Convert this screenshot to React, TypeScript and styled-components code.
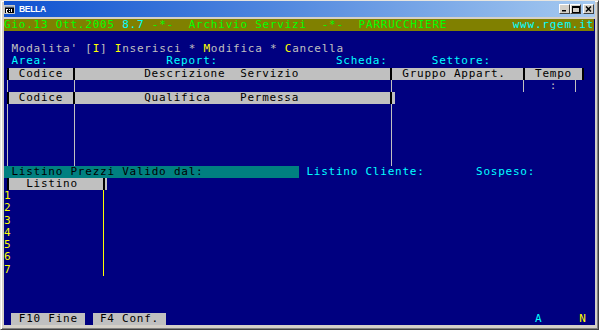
import React from "react";
import styled, { createGlobalStyle } from "styled-components";

// console cell size (80 x 25 grid scaled into the window)
const CW = 7.3875;
const RH = 12.25;
const FONT = 11;

const GlobalStyle = createGlobalStyle`
  html, body {
    margin: 0;
    padding: 0;
    background: #d4d0c8;
  }
  body {
    width: 599px;
    height: 330px;
    overflow: hidden;
  }
`;

type Place = { $c: number; $r: number; $w?: number; $h?: number };

const place = ({ $c, $r, $w = 1, $h = 1 }: Place) => `
  grid-column: ${$c + 1} / span ${$w};
  grid-row: ${$r + 1} / span ${$h};
`;

const Window = styled.div`
  width: 599px;
  height: 330px;
  box-sizing: border-box;
  background: #d4d0c8;
  border: 1px solid;
  border-color: #e8e6e0 #404040 #404040 #e8e6e0;
  box-shadow: inset 1px 1px 0 #ffffff, inset -1px -1px 0 #808080;
  padding: 0 3px 4px 3px;
  display: flex;
  flex-direction: column;
`;

const TitleBar = styled.div`
  height: 16px;
  margin-bottom: 1.5px;
  display: flex;
  align-items: center;
  gap: 4px;
  padding: 0 1px 0 0;
  background: linear-gradient(to right, #0f52d0, #4f86de 45%, #a6caf0);
`;

const TitleText = styled.span`
  flex: 1;
  color: #ffffff;
  font-family: "Liberation Sans", Arial, sans-serif;
  font-weight: bold;
  font-size: 8.5px;
  letter-spacing: -0.3px;
`;

const Controls = styled.div`
  display: flex;
  align-items: center;
  gap: 0;
`;

const CtrlButton = styled.div<{ $gap?: boolean }>`
  width: 11px;
  height: 10px;
  margin-left: ${(p) => (p.$gap ? "2px" : "0")};
  box-sizing: border-box;
  background: #d4d0c8;
  border: 1px solid;
  border-color: #ffffff #404040 #404040 #ffffff;
  display: flex;
  align-items: center;
  justify-content: center;
`;

const Console = styled.div`
  display: grid;
  grid-template-columns: repeat(80, ${CW}px);
  grid-template-rows: repeat(25, ${RH}px);
  background: #000080;
  font-family: "DejaVu Sans Mono", "Liberation Mono", monospace;
  font-size: ${FONT}px;
  letter-spacing: ${CW - FONT * 0.60205}px;
  line-height: ${RH}px;
  color: #c0c0c0;
  white-space: pre;
`;

const StatusBar = styled.div`
  grid-column: 1 / span 80;
  grid-row: 1;
  display: flex;
  background: #808000;
  color: #00ff00;
`;

const Tint = styled.span<{ $fg: string }>`
  color: ${(p) => p.$fg};
`;

const Url = styled.span`
  margin-left: auto;
  color: #00ffff;
`;

const MenuLine = styled.div<Place>`
  ${place}
  color: #c0c0c0;
`;

const Hot = styled.span`
  color: #ffff00;
`;

const FieldLabel = styled.div<Place>`
  ${place}
  color: #00ffff;
`;

const TableHeader = styled.div<Place & { $cut?: boolean }>`
  ${place}
  background: #c0c0c0;
  margin-left: ${CW / 2}px;
  margin-right: ${(p) => (p.$cut ? CW / 2 : 0)}px;
`;

const HeadLabel = styled.div<Place>`
  ${place}
  color: #000000;
`;

const Rule = styled.div<Place & { $color: string; $thick?: number }>`
  ${place}
  justify-self: center;
  width: ${(p) => p.$thick ?? 1}px;
  background: ${(p) => p.$color};
`;

const Glyph = styled.div<Place & { $fg: string }>`
  ${place}
  color: ${(p) => p.$fg};
`;

const PriceBar = styled.div<Place>`
  ${place}
  background: #008080;
  color: #000000;
  padding-left: ${CW}px;
`;

const RowNumber = styled.div<Place>`
  ${place}
  color: #ffff00;
`;

const KeyButton = styled.div<Place>`
  ${place}
  background: #c0c0c0;
  color: #000000;
`;

const AppIcon = () => (
  <svg width="11" height="9" viewBox="0 0 11 9">
    <rect x="0.5" y="0.5" width="10" height="8" fill="#000" stroke="#c8c8c8" />
    <rect x="1" y="1" width="9" height="1.5" fill="#9ab" />
    <rect x="2" y="4" width="2" height="1" fill="#fff" />
    <rect x="5" y="4" width="1" height="1" fill="#fff" />
    <rect x="5" y="6" width="1" height="1" fill="#fff" />
    <rect x="7" y="4" width="1" height="3" fill="#fff" />
    <rect x="2" y="5" width="1" height="2" fill="#fff" />
    <rect x="2" y="7" width="2" height="0.8" fill="#fff" />
  </svg>
);

const rules = (
  cols: number[],
  row: number,
  rows: number,
  color: string,
  thick = 1
) =>
  cols.map((c) => (
    <Rule
      key={`${row}-${c}-${color}`}
      $c={c}
      $r={row}
      $h={rows}
      $color={color}
      $thick={thick}
    />
  ));

const GREY = "#c0c0c0";
const BLACK = "#000000";

const App = () => {
  return (
    <>
      <GlobalStyle />
      <Window>
        <TitleBar>
          <AppIcon />
          <TitleText>BELLA</TitleText>
          <Controls>
            <CtrlButton>
              <svg width="7" height="6" viewBox="0 0 7 6">
                <rect x="1" y="4" width="4" height="1.5" fill="#000" />
              </svg>
            </CtrlButton>
            <CtrlButton>
              <svg width="8" height="7" viewBox="0 0 8 7">
                <rect x="0.5" y="0.5" width="7" height="6" fill="none" stroke="#000" />
                <rect x="0" y="0" width="8" height="2" fill="#000" />
              </svg>
            </CtrlButton>
            <CtrlButton $gap>
              <svg width="7" height="6" viewBox="0 0 7 6">
                <path d="M1 0.5 L6 5.5 M6 0.5 L1 5.5" stroke="#000" strokeWidth="1.5" />
              </svg>
            </CtrlButton>
          </Controls>
        </TitleBar>

        <Console>
          <StatusBar>
            <span>Gio.13 Ott.2005 </span>
            <Tint $fg="#00ffff">8.7</Tint>
            <span> -*-  Archivio Servizi  -*-  PARRUCCHIERE</span>
            <Url>www.rgem.it</Url>
          </StatusBar>

          <MenuLine $c={1} $r={2} $w={45}>
            Modalita' [<Hot>I</Hot>] <Hot>I</Hot>nserisci * <Hot>M</Hot>odifica *{" "}
            <Hot>C</Hot>ancella
          </MenuLine>

          <FieldLabel $c={1} $r={3} $w={5}>Area:</FieldLabel>
          <FieldLabel $c={22} $r={3} $w={7}>Report:</FieldLabel>
          <FieldLabel $c={45} $r={3} $w={7}>Scheda:</FieldLabel>
          <FieldLabel $c={58} $r={3} $w={8}>Settore:</FieldLabel>

          {/* servizi table */}
          <TableHeader $c={0} $r={4} $w={79} $cut />
          <HeadLabel $c={2} $r={4} $w={6}>Codice</HeadLabel>
          <HeadLabel $c={19} $r={4} $w={21}>Descrizione  Servizio</HeadLabel>
          <HeadLabel $c={54} $r={4} $w={14}>Gruppo Appart.</HeadLabel>
          <HeadLabel $c={72} $r={4} $w={5}>Tempo</HeadLabel>
          {rules([0, 9, 52, 70, 78], 4, 1, BLACK, 2)}

          {rules([0, 9, 52, 70, 77], 5, 1, GREY)}
          <Glyph $c={74} $r={5} $fg={GREY}>:</Glyph>

          {/* qualifiche table */}
          <TableHeader $c={0} $r={6} $w={53} />
          <HeadLabel $c={2} $r={6} $w={6}>Codice</HeadLabel>
          <HeadLabel $c={19} $r={6} $w={9}>Qualifica</HeadLabel>
          <HeadLabel $c={32} $r={6} $w={8}>Permessa</HeadLabel>
          {rules([0, 9, 52], 6, 1, BLACK, 2)}
          {rules([0, 9, 52], 7, 5, GREY)}

          {/* listino */}
          <PriceBar $c={0} $r={12} $w={40}>Listino Prezzi Valido dal:</PriceBar>
          <FieldLabel $c={41} $r={12} $w={16}>Listino Cliente:</FieldLabel>
          <FieldLabel $c={64} $r={12} $w={8}>Sospeso:</FieldLabel>

          <TableHeader $c={0} $r={13} $w={14} />
          <HeadLabel $c={3} $r={13} $w={7}>Listino</HeadLabel>
          {rules([0, 13], 13, 1, BLACK, 2)}
          {rules([13], 14, 7, "#ffff00", 1.5)}
          {[1, 2, 3, 4, 5, 6, 7].map((n) => (
            <RowNumber key={n} $c={0} $r={13 + n}>
              {n}
            </RowNumber>
          ))}

          {/* function keys */}
          <KeyButton $c={1} $r={24} $w={10}> F10 Fine </KeyButton>
          <KeyButton $c={12} $r={24} $w={10}> F4 Conf. </KeyButton>
          <Glyph $c={72} $r={24} $fg="#00ffff">A</Glyph>
          <Glyph $c={78} $r={24} $fg="#ffff00">N</Glyph>
        </Console>
      </Window>
    </>
  );
};

export default App;
